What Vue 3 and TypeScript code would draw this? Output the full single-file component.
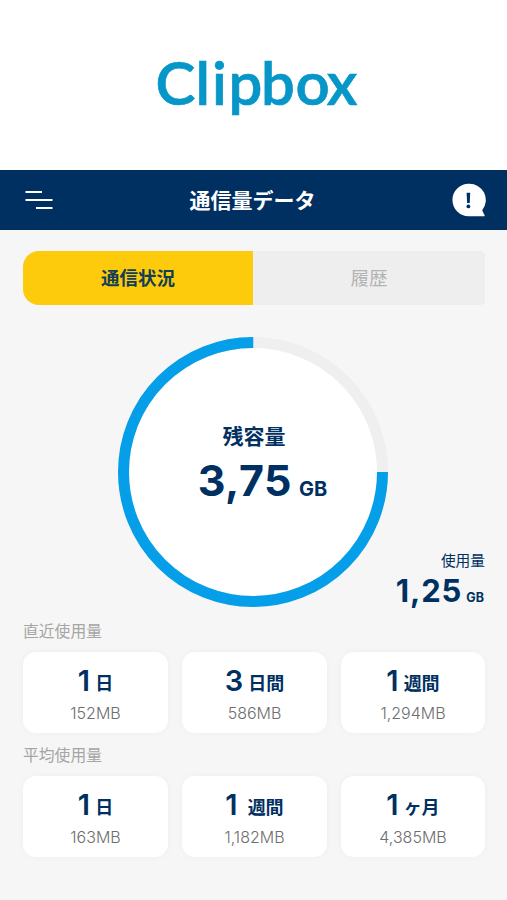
<script setup lang="ts">
import { ref } from 'vue'

interface Period {
  count: string
  unit: string
  amount: string
  gap: number
}

interface UsageGroup {
  title: string
  periods: Period[]
}

const activeTab = ref(0)
const tabs: string[] = ['通信状況', '履歴']
const remainingRatio = 0.75
const ringLength = 2 * Math.PI * 129.5

const groups: UsageGroup[] = [
  {
    title: '直近使用量',
    periods: [
      { count: '1', unit: '日', amount: '152MB', gap: 5 },
      { count: '3', unit: '日間', amount: '586MB', gap: 5 },
      { count: '1', unit: '週間', amount: '1,294MB', gap: 5 },
    ],
  },
  {
    title: '平均使用量',
    periods: [
      { count: '1', unit: '日', amount: '163MB', gap: 5 },
      { count: '1', unit: '週間', amount: '1,182MB', gap: 10 },
      { count: '1', unit: 'ヶ月', amount: '4,385MB', gap: 5 },
    ],
  },
]
</script>

<template>
  <div class="screen">
    <div class="brand">
      <svg class="logo" width="220" height="90" viewBox="0 0 220 90" role="img" aria-label="Clipbox">
        <text x="11.5 51.5 68 84.5 117 151.5 182.8" y="65">Clipbox</text>
      </svg>
    </div>
    <header class="bar">
      <svg class="menu" width="28" height="20" viewBox="0 0 28 20">
        <path d="M0.5 2H17M0.5 10H27.5M11 18H27.5" />
      </svg>
      <h1>通信量データ</h1>
      <svg class="notice" width="34" height="34" viewBox="0 0 34 34">
        <path class="bubble" d="M16.7 .7A16.2 16.2 0 0 0 16.7 33.2H32.2C32.9 33.2 33 32.7 32.5 32.2L30.2 27.2A16.3 16.3 0 0 0 16.7 .7Z" />
        <path class="mark" d="M14.6 9.8H18.2L17.7 20H15.1Z" />
        <circle class="mark" cx="16.4" cy="23.4" r="1.9" />
      </svg>
    </header>
    <main>
      <nav class="tabs">
        <button v-for="(tab, i) in tabs" :key="tab" :class="{ active: activeTab === i }" @click="activeTab = i">{{ tab }}</button>
      </nav>
      <section class="gauge-area">
        <div class="gauge">
          <svg class="ring" width="270" height="270" viewBox="0 0 270 270">
            <circle class="track" cx="135" cy="135" r="129.5" />
            <circle
              class="value" cx="135" cy="135" r="129.5"
              :stroke-dasharray="`${ringLength * remainingRatio} ${ringLength}`"
            />
          </svg>
          <div class="remaining">
            <span class="label">残容量</span>
            <span class="figure"><b>3,75</b><small>GB</small></span>
          </div>
        </div>
        <div class="used">
          <span class="label">使用量</span>
          <span class="figure"><b>1,25</b><small>GB</small></span>
        </div>
      </section>
      <section v-for="group in groups" :key="group.title" class="group">
        <h2>{{ group.title }}</h2>
        <div class="cards">
          <article v-for="(p, i) in group.periods" :key="i" class="card">
            <div class="period" :style="{ gap: p.gap + 'px' }"><b>{{ p.count }}</b><span>{{ p.unit }}</span></div>
            <div class="amount">{{ p.amount }}</div>
          </article>
        </div>
      </section>
    </main>
  </div>
</template>

<style>
body { background: #f6f6f6; }
</style>

<style scoped>
.screen {
  box-sizing: border-box;
  height: 900px;
  overflow: hidden;
  background: #f6f6f6;
  color: #003061;
  font-family: Inter, "Noto Sans CJK JP", sans-serif;
}
.brand {
  height: 170px;
  display: flex;
  justify-content: center;
  align-items: flex-start;
  padding-top: 40px;
  box-sizing: border-box;
  background: #fff;
}
.logo text {
  font-family: Lato, sans-serif;
  font-size: 60px;
  font-weight: 600;
  fill: #0796c8;
  stroke: #0796c8;
  stroke-width: .7px;
}
.bar {
  display: flex;
  align-items: center;
  justify-content: space-between;
  height: 60px;
  box-sizing: border-box;
  padding: 0 21px 0 25px;
  background: #003061;
}
.menu path { stroke: #fff; stroke-width: 2.2; fill: none; }
.bubble { fill: #fff; }
.mark { fill: #003061; }
h1 {
  margin: 2px 0 0;
  color: #fff;
  font-size: 21px;
  line-height: 30px;
  font-weight: 700;
}
main { padding: 21px 22px 0 23px; }
.tabs {
  display: flex;
  height: 54px;
  border-radius: 16px 5px 5px 16px;
  overflow: hidden;
  background: #eee;
}
.tabs button {
  flex: 1;
  border: 0;
  padding: 0;
  background: #eee;
  color: #b3b3b3;
  font: 400 18.5px/54px Inter, "Noto Sans CJK JP", sans-serif;
}
.tabs button.active {
  flex: 0 0 230px;
  background: #fdcb0c;
  color: #123f54;
  font-weight: 700;
}
.gauge-area {
  display: grid;
  justify-items: center;
  height: 317px;
}
.gauge-area > * { grid-area: 1 / 1; }
.gauge {
  display: grid;
  width: 272px;
  height: 270px;
  margin-top: 32px;
}
.gauge > * { grid-area: 1 / 1; }
.ring { transform: rotate(90deg); }
.track { fill: #fff; stroke: #efefef; stroke-width: 11; }
.value { fill: none; stroke: #049fe8; stroke-width: 11; transform: rotate(-90deg); transform-origin: center; }
.remaining {
  z-index: 1;
  display: flex;
  flex-direction: column;
  align-items: center;
  padding-top: 85px;
}
.remaining .label { font-size: 21px; line-height: 30px; font-weight: 700; }
.figure { display: flex; align-items: baseline; }
.figure b, .figure small { font-weight: 700; }
.remaining .figure { margin: 2px 0 0 17px; gap: 7px; line-height: 52px; }
.remaining b { font-size: 43px; letter-spacing: .5px; }
.remaining small { font-size: 20px; }
.used {
  justify-self: end;
  display: flex;
  flex-direction: column;
  align-items: flex-end;
  padding-top: 246px;
}
.used .label { font-size: 14.7px; line-height: 20px; }
.used .figure { gap: 4px; margin: 2px 1px 0 0; line-height: 36px; }
.used b { font-size: 31px; letter-spacing: .9px; }
.used small { font-size: 12.5px; }
.group { height: 124px; }
h2 {
  margin: 0;
  height: 30px;
  color: #a5a5a5;
  font-size: 15.8px;
  line-height: 20px;
  font-weight: 400;
}
.cards {
  display: grid;
  grid-template-columns: 145px 145px 144px;
  justify-content: space-between;
}
.card {
  height: 81px;
  border-radius: 13px;
  background: #fff;
  box-shadow: 0 0 7px rgba(0, 0, 0, .035);
  text-align: center;
}
.period {
  display: flex;
  justify-content: center;
  align-items: baseline;
  height: 46px;
  line-height: 58px;
}
.period b { font-size: 29px; font-weight: 600; }
.period span { position: relative; top: -1px; font-size: 18px; font-weight: 700; }
.amount {
  color: #6e6e6e;
  font-size: 16px;
  line-height: 30px;
  font-weight: 300;
}
</style>
